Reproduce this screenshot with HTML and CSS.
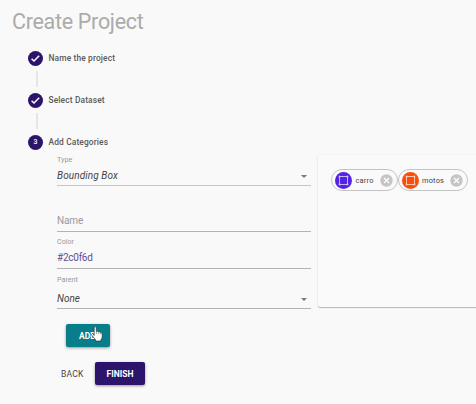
FILE: index.html
```html
<!DOCTYPE html>
<html lang="en">
<head>
<meta charset="utf-8">
<title>Create Project</title>
<link rel="stylesheet" href="styles.css">
</head>
<body>
<h1 class="title">Create Project</h1>
<div class="step"><span class="badge"><svg width="15" height="15" viewBox="0 0 15 15"><path class="tick" d="M3.6 7.7l2.4 2.3 5.2-5.2"/></svg></span><span class="step-name">Name the project</span></div>
<div class="connector"></div>
<div class="step"><span class="badge"><svg width="15" height="15" viewBox="0 0 15 15"><path class="tick" d="M3.6 7.7l2.4 2.3 5.2-5.2"/></svg></span><span class="step-name">Select Dataset</span></div>
<div class="connector"></div>
<div class="step"><span class="badge">3</span><span class="step-name">Add Categories</span></div>
<main class="content">
  <form class="form">
    <div class="field type"><label>Type</label><div class="value select"><span class="choice type-choice">Bounding Box</span><i class="arrow"></i></div></div>
    <div class="field name"><div class="value placeholder">Name</div></div>
    <div class="field color"><label>Color</label><div class="value hex">#2c0f6d</div></div>
    <div class="field parent"><label>Parent</label><div class="value select"><span class="choice">None</span><i class="arrow"></i></div></div>
  </form>
  <section class="card">
    <div class="chip"><span class="avatar"><svg width="17" height="17" viewBox="0 0 17 17"><path class="box" d="M4.5 4.5h8v8h-8z"/><path class="corner" d="M3.5 3.5h2v2h-2zM11.5 3.5h2v2h-2zM3.5 11.5h2v2h-2zM11.5 11.5h2v2h-2z"/></svg></span><span class="chip-name">carro</span><svg class="remove" width="13" height="13" viewBox="0 0 13 13"><circle cx="6.5" cy="6.5" r="6.2"/><path d="M4 4l5 5M9 4l-5 5"/></svg></div>
    <div class="chip orange"><span class="avatar"><svg width="17" height="17" viewBox="0 0 17 17"><path class="box" d="M4.5 4.5h8v8h-8z"/><path class="corner" d="M3.5 3.5h2v2h-2zM11.5 3.5h2v2h-2zM3.5 11.5h2v2h-2zM11.5 11.5h2v2h-2z"/></svg></span><span class="chip-name">motos</span><svg class="remove" width="13" height="13" viewBox="0 0 13 13"><circle cx="6.5" cy="6.5" r="6.2"/><path d="M4 4l5 5M9 4l-5 5"/></svg></div>
  </section>
</main>
<div class="add-row"><button class="btn add">ADD<svg class="pointer" width="12" height="16" viewBox="0 0 12 16"><path d="M3.2 9.5V2Q3.2.6 4.2.6T5.3 2V5.5Q6.8 4.8 7.4 6Q8.7 5.4 9.3 6.6Q11 6.2 11.2 8V10.8Q11.2 12.3 10 13.5V15H4.5V13.7L.9 9.4Q.4 8 1.4 7.6Q2.3 7.4 3.2 9.5Z"/><path class="finger" d="M5.4 6v2M7.4 6.5V8M9.3 7v1.5"/></svg></button></div>
<div class="actions"><span class="back">BACK</span><button class="btn finish">FINISH</button></div>
</body>
</html>
```

FILE: styles.css
```css
* { box-sizing: border-box; }
body {
  margin: 0;
  height: 404px;
  overflow: hidden;
  background: #f9f9f9;
  font-family: Roboto, sans-serif;
  color: #444;
}
.title {
  margin: 0;
  padding: 8px 0 0 12px;
  height: 50px;
  font-size: 21.5px;
  line-height: 27px;
  font-weight: 400;
  letter-spacing: -0.3px;
  color: #ababab;
}
.step { display: flex; align-items: center; height: 16px; padding-left: 28px; }
.badge {
  display: flex;
  align-items: center;
  justify-content: center;
  width: 15px;
  height: 15px;
  margin-right: 5.5px;
  border-radius: 50%;
  background: #2c136c;
  color: #fff;
  font-size: 7px;
  font-weight: 500;
}
.tick { fill: none; stroke: #fff; stroke-width: 1.5; }
.step-name { font-size: 8.4px; font-weight: 500; letter-spacing: 0.14px; color: #5a5a5a; }
.connector { width: 2px; height: 16px; margin: 5px 0 5px 36px; background: #e6e6e6; }
.content { display: flex; height: 159px; padding-left: 57px; }
.form { width: 253.5px; }
.field { display: flex; flex-direction: column; border-bottom: 1px solid #b3b3b3; }
.type { height: 36px; padding-top: 5px; border-color: #c6c6c6; }
.name { height: 46px; justify-content: flex-end; padding-bottom: 3px; }
.color { height: 37px; padding-top: 5px; }
.parent { height: 40px; padding-top: 6px; }
label { font-size: 7.2px; line-height: 9px; color: #999; }
.value { font-size: 10px; line-height: 14px; }
.select { display: flex; align-items: center; justify-content: space-between; margin-top: 5px; padding-right: 4px; }
.parent .select { margin-top: 8px; }
.choice { font-style: italic; }
.type-choice { letter-spacing: 0.1px; }
.arrow { border: 3px solid transparent; border-top-color: #777; border-bottom: 0; }
.placeholder { color: #999; letter-spacing: -0.1px; }
.hex { margin-top: 5px; color: #674c94; letter-spacing: -0.25px; }
.card {
  display: flex;
  align-items: flex-start;
  flex: 1;
  height: 152px;
  margin: 5px -10px 0 7.5px;
  padding: 14px 0 0 13px;
  border-radius: 2px;
  background: #fafafa;
  box-shadow: 0 1px 1px #b5b5b5, 0 0 2px #e8e8e8;
}
.chip {
  display: flex;
  align-items: center;
  flex: none;
  width: 66.5px;
  height: 22px;
  padding: 0 4px 0 3px;
  border: 1px solid #c4c4c4;
  border-radius: 11px;
  color: #444;
}
.chip + .chip { width: 70px; }
.avatar { width: 17px; height: 17px; border-radius: 50%; background: #5422e5; }
.orange .avatar { background: #fb4d0a; }
.avatar svg { display: block; }
.box { fill: none; stroke: #fff; stroke-opacity: 0.65; stroke-width: 1; }
.corner { fill: #fff; fill-opacity: 0.4; }
.chip-name { margin-left: 3.5px; font-size: 7.4px; letter-spacing: 0.2px; }
.remove { margin-left: auto; }
.remove circle { fill: #c5c5c5; }
.remove path { fill: none; stroke: #fff; stroke-width: 1.2; }
.btn {
  position: relative;
  display: block;
  padding: 0;
  border: 0;
  border-radius: 2px;
  font: 700 8.5px Roboto, sans-serif;
  color: #fff;
  box-shadow: 0 1px 3px rgba(0, 0, 0, 0.4);
}
.add-row { padding: 15px 0 0 65.5px; }
.add { width: 44px; height: 23px; background: #087e8b; }
.pointer { position: absolute; left: 25px; top: 2px; }
.pointer path { fill: #fff; stroke: #222; stroke-width: 0.6; }
.pointer .finger { fill: none; stroke-width: 0.4; }
.actions { display: flex; align-items: center; padding: 15px 0 0 61px; }
.back { width: 34px; font-size: 8.5px; letter-spacing: 0.2px; }
.finish { width: 50px; height: 23px; background: #2c136c; }
```
